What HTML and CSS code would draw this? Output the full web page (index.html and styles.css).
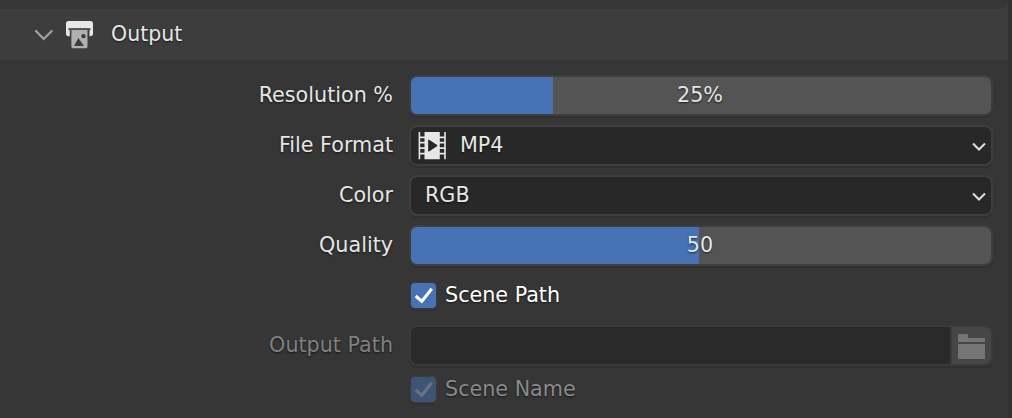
FILE: index.html
```html
<!DOCTYPE html>
<html lang="en">
<head>
<meta charset="utf-8">
<title>Output</title>
<link rel="stylesheet" href="styles.css">
</head>
<body>
<main class="panel">
  <div class="previous"></div>
  <header class="header">
    <svg class="disclosure" width="20" height="12" viewBox="0 0 20 12"><path d="M2 2 L9.7 10 L17.7 2" fill="none" stroke="#a2a2a2" stroke-width="2.2" stroke-linecap="round"/></svg>
    <svg class="printer" width="28" height="28" viewBox="0 0 28 28">
      <path d="M2.5 0H24.5Q27 0 27 2.5V12.5Q27 15.3 24.2 15.3H23.5V7.5H3.8V15.3H2.8Q0 15.3 0 12.5V2.5Q0 0 2.5 0Z" fill="#e6e6e6"/>
      <path d="M2.5 7.2H24.5V9.2H2.5Z" fill="#505050"/>
      <path d="M5.4 9H21.5V25.8Q21.5 27.2 20.1 27.2H6.8Q5.4 27.2 5.4 25.8Z" fill="#b0b0b0"/>
      <path d="M8 25L12.4 17L18 25Z" fill="#3d3d3d"/><circle cx="17.5" cy="15.2" r="2.1" fill="#3d3d3d"/>
    </svg>
    <h1 class="title">Output</h1>
  </header>
  <div class="rows">
    <div class="row"><span class="label">Resolution %</span><div class="field slider"><div class="fill" style="width:142px"></div><span class="value">25%</span></div></div>
    <div class="row"><span class="label">File Format</span><div class="field menu with-icon">
      <svg class="film" width="28" height="28" viewBox="0 0 28 28">
        <path d="M.6 0H2.2V27.2H.6ZM6.5 0H21.8V27.2H6.5ZM26.2 0H27.8V27.2H26.2Z" fill="#e6e6e6"/>
        <path d="M1.5 5.3H7M1.5 10.7H7M1.5 16.2H7M1.5 21.6H7M21 5.3H27M21 10.7H27M21 16.2H27M21 21.6H27" stroke="#e6e6e6" stroke-width="1.8"/>
        <path d="M10.7 8L19.2 13.6L10.7 19.2Z" fill="#282828" stroke="#282828" stroke-linejoin="round"/>
      </svg><span class="text">MP4</span>
      <svg class="arrow" width="16" height="10" viewBox="0 0 16 10"><path d="M2 1.6L8 7.6L14 1.6" fill="none" stroke="#dedede" stroke-width="2.1"/></svg></div></div>
    <div class="row"><span class="label">Color</span><div class="field menu"><span class="text">RGB</span>
      <svg class="arrow" width="16" height="10" viewBox="0 0 16 10"><path d="M2 1.6L8 7.6L14 1.6" fill="none" stroke="#dedede" stroke-width="2.1"/></svg></div></div>
    <div class="row"><span class="label">Quality</span><div class="field slider"><div class="fill" style="width:288px"></div><span class="value">50</span></div></div>
    <div class="row"><span class="label"></span><div class="check"><span class="box"><svg width="25" height="25" viewBox="0 0 25 25"><path d="M4.7 13L10.8 18.3L20.8 5.7" fill="none" stroke="#fff" stroke-width="3"/></svg></span><span class="check-text">Scene Path</span></div></div>
    <div class="row disabled"><span class="label">Output Path</span><div class="field path"><div class="entry"></div><div class="browse">
      <svg width="27" height="26" viewBox="0 0 27 26"><path d="M0 .8Q0 0 .8 0H9.2Q10 0 10 .8V4H27V8H0ZM0 10H27V24.2Q27 25 26.2 25H.8Q0 25 0 24.2Z" fill="#757575"/></svg></div></div></div>
    <div class="row last disabled"><span class="label"></span><div class="check"><span class="box"><svg width="25" height="25" viewBox="0 0 25 25"><path d="M4.7 13L10.8 18.3L20.8 5.7" fill="none" stroke="#697381" stroke-width="3"/></svg></span><span class="check-text">Scene Name</span></div></div>
  </div>
</main>
</body>
</html>
```
FILE: styles.css
```css
* { box-sizing: border-box; }
body { margin: 0; background: #303030; overflow: hidden; font: 20.7px/24px "DejaVu Sans", sans-serif; color: #e6e6e6; text-shadow: 0 1px 2px rgba(0,0,0,.65); }
svg { display: block; flex: none; }
.panel { width: 1008px; height: 418px; background: linear-gradient(#3d3d3d 0 60px, #363636 60px); }
.previous { height: 9px; background: #363636; border-bottom-right-radius: 8px; }
.header { height: 51px; display: flex; align-items: flex-start; padding-left: 34px; }
.disclosure { margin-top: 20px; }
.printer { margin: 12px 0 0 12px; }
.title { margin: 13px 0 0 17px; font-size: 20.5px; font-weight: 400; }
.rows { padding: 11px 15px 0 0; }
.row { height: 50px; display: flex; align-items: flex-start; padding-top: 4px; }
.label { width: 393px; margin: 8px 16px 0 0; text-align: right; white-space: nowrap; }
.field { width: 584px; height: 41px; display: flex; align-items: center; border: 2px solid #3e3e3e; border-radius: 8px; background: #282828; background-clip: padding-box; box-shadow: 0 2px 0 #303030; overflow: hidden; }
.slider { display: grid; grid-template-columns: 1fr; align-items: stretch; background-color: #545454; }
.fill, .value { grid-area: 1 / 1; }
.fill { background: #4772b3; }
.value { position: relative; text-align: center; padding-top: 6px; right: 1px; }
.menu { padding-left: 14px; }
.with-icon { padding-left: 7px; }
.film { margin-right: 14px; }
.text { margin-top: -1px; }
.arrow { margin: 2px 4px 0 auto; }
.check { display: flex; padding: 8px 0 0 2px; }
.box { width: 25px; height: 25px; border-radius: 4px; background: #4772b3; box-shadow: 0 0 0 1px #3d3d3d, 0 2px 0 1px #303030; }
.check-text { margin-left: 9px; color: #fff; }
.disabled { color: #808080; }
.disabled .check-text { color: #8a8a8a; }
.disabled .box { background: #3e5475; }
.path { align-items: stretch; background-color: #2a2a2a; border-color: #3a3a3a; }
.entry { flex: 1; }
.browse { width: 41px; padding: 7px 0 0 6px; border-left: 2px solid #3a3a3a; background: #464646; }
.last { margin-top: -6px; }
```
